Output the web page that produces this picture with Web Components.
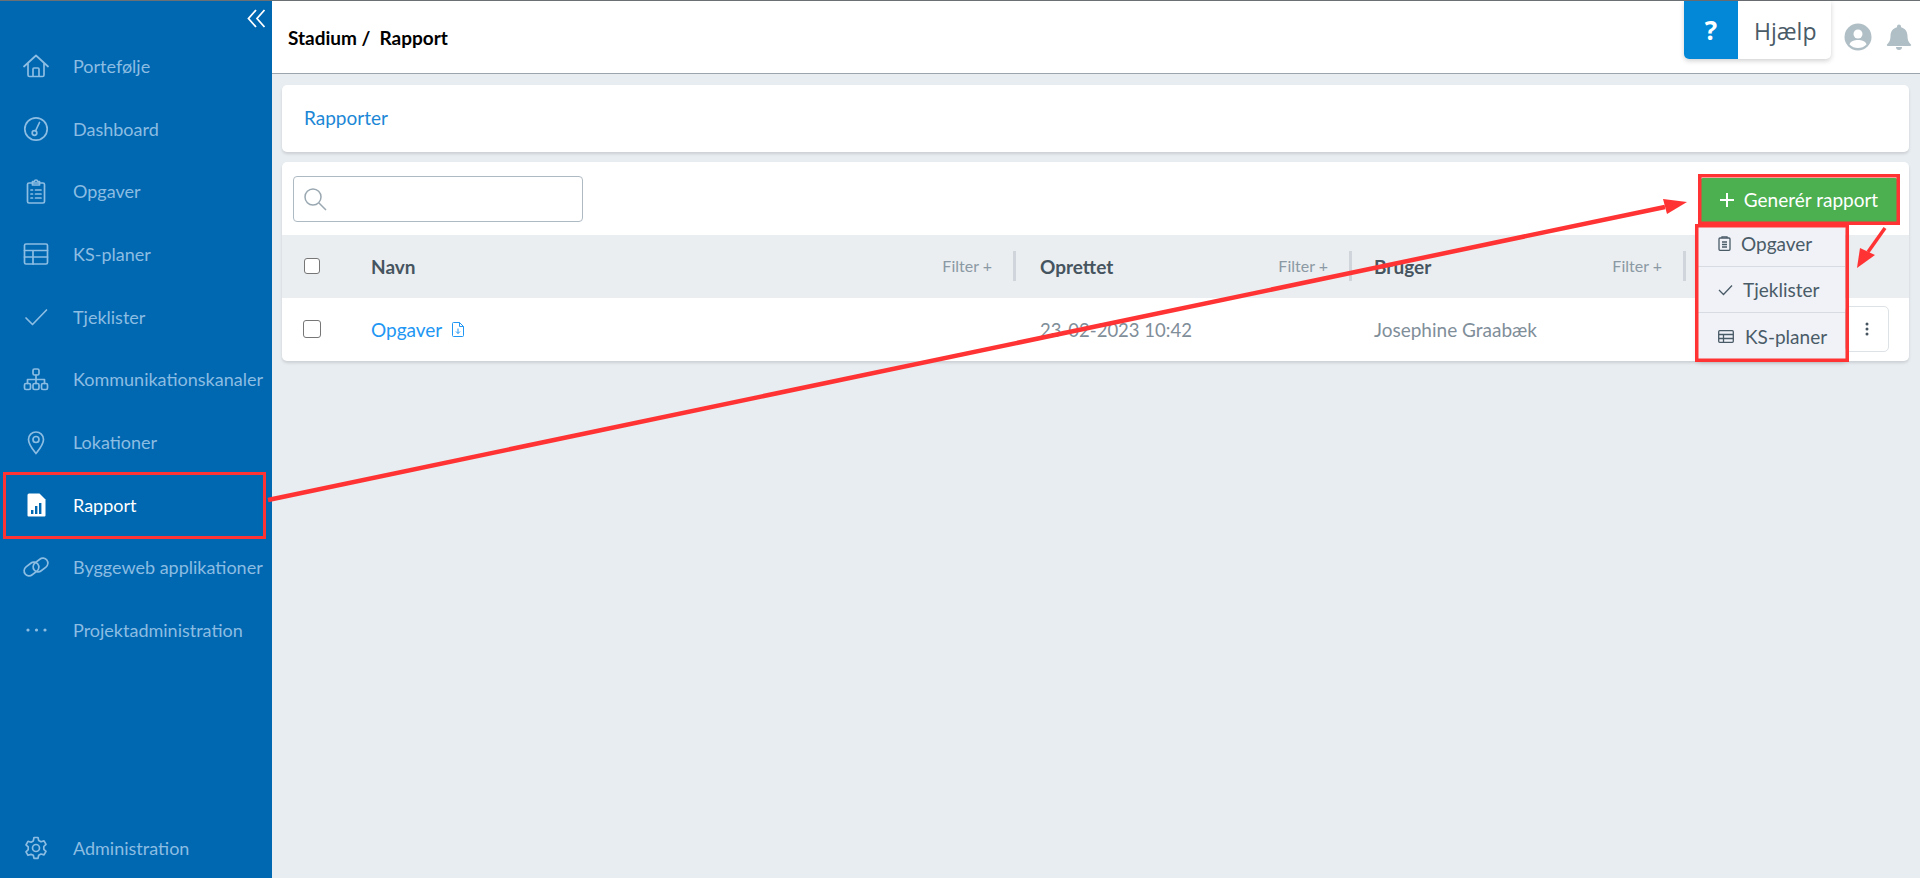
<!DOCTYPE html>
<html>
<head>
<meta charset="utf-8">
<style>
  html, body { margin: 0; height: 100%; }
  body { font-family: Lato, "Liberation Sans", sans-serif; overflow: hidden; }
  nav-item[slot=bottom] { height: 60px; }
</style>
</head>
<body>
<app-shell>
  <app-sidebar slot="side">
    <nav-item icon="home">Portefølje</nav-item>
    <nav-item icon="gauge">Dashboard</nav-item>
    <nav-item icon="clipboard">Opgaver</nav-item>
    <nav-item icon="table">KS-planer</nav-item>
    <nav-item icon="check">Tjeklister</nav-item>
    <nav-item icon="sitemap">Kommunikationskanaler</nav-item>
    <nav-item icon="pin">Lokationer</nav-item>
    <nav-item icon="report" active>Rapport</nav-item>
    <nav-item icon="link">Byggeweb applikationer</nav-item>
    <nav-item icon="dots">Projektadministration</nav-item>
    <nav-item icon="gear" slot="bottom">Administration</nav-item>
  </app-sidebar>
  <app-header slot="head"></app-header>
  <tab-card>Rapporter</tab-card>
  <report-table></report-table>
</app-shell>
<red-marks></red-marks>

<script>
const ICONS = {
  home: '<path d="M1 13.500 13 2.500l12 11M5 10.500V22a1.500 1.500 0 0 0 1.500 1.500h13A1.500 1.500 0 0 0 21 22V10.500M10 23.500V16a1 1 0 0 1 1-1h4a1 1 0 0 1 1 1v7.500"/>',
  gauge: '<circle cx="13" cy="13" r="11.200"/><circle cx="11.500" cy="17" r="2.300"/><path d="M12.500 15 16.500 6.500"/>',
  clipboard: '<rect x="4.500" y="5" width="17" height="20" rx="1.500"/><path d="M9.500 5V3.500h2a1.500 1.500 0 0 1 3 0h2V7h-7zM12.500 12H18M12.500 16H18M12.500 20H18M8 12h1.500M8 16h1.500M8 20h1.500"/>',
  table: '<rect x="1.500" y="3" width="23" height="20" rx="1.500"/><path d="M1.500 9.500h23M1.500 16h23M10 9.500V23"/>',
  check: '<path d="M3 14 9.500 20.500 23.500 6"/>',
  sitemap: '<rect x="10" y="3" width="6" height="6" rx="1.500"/><rect x="1.500" y="17.500" width="6" height="6" rx="1.500"/><rect x="10" y="17.500" width="6" height="6" rx="1.500"/><rect x="18.500" y="17.500" width="6" height="6" rx="1.500"/><path d="M13 9v8.500M4.500 17.500V13.500h17v4"/>',
  pin: '<path d="M13 24.500C9 19.500 5.500 15.500 5.500 10.500a7.500 7.500 0 0 1 15 0c0 5-3.500 9-7.500 14z"/><circle cx="13" cy="10.500" r="3"/>',
  link: '<rect x="0.500" y="10" width="16" height="10" rx="5" transform="rotate(-38 8.500 15)"/><rect x="9.500" y="6" width="16" height="10" rx="5" transform="rotate(-38 17.500 11)"/>',
  gear: '<circle cx="13" cy="13" r="3.500"/><path d="M11 2.500h4l.7 3 2.300 1.300 3-.9 2 3.500-2.200 2.100v2.800l2.200 2.100-2 3.500-3-.9-2.300 1.300-.7 3h-4l-.7-3L8 19.400l-3 .9-2-3.500 2.200-2.100v-2.800L3 9.800l2-3.500 3 .9 2.300-1.300z"/>'
};
function icon(name) {
  if (name === 'report') return '<svg viewBox="0 0 26 26" width="26" height="26"><path fill="#fff" d="M6 1.500h10.500l6 6V23.500a1 1 0 0 1-1 1H5.500a1 1 0 0 1-1-1V3a1.500 1.500 0 0 1 1.500-1.500z"/><path fill="#0067b1" d="M8 18h2.400v4H8zM12 14h2.400v8H12zM16 11h2.400v11H16z"/></svg>';
  if (name === 'dots') return '<svg viewBox="0 0 26 26" width="26" height="26" fill="#8cbde2"><circle cx="5" cy="13" r="1.600"/><circle cx="13.500" cy="13" r="1.600"/><circle cx="22" cy="13" r="1.600"/></svg>';
  return `<svg viewBox="0 0 26 26" width="26" height="26" fill="none" stroke="currentColor" stroke-width="1.700" stroke-linecap="round" stroke-linejoin="round">${ICONS[name]}</svg>`;
}

class AppShell extends HTMLElement {
  constructor() {
    super();
    this.shadow = this.attachShadow({ mode: "open" });
    this.shadow.innerHTML = `<style>
      :host { display: grid; grid-template-columns: 272px 1fr; grid-template-rows: 73px 1fr; height: 878px; background: #e8edf1; border-top: 1px solid #6b7075; box-sizing: border-box; }
      .side { grid-row: 1 / 3; display: flex; }
      main { padding: 11px 11px 0 10px; display: flex; flex-direction: column; gap: 10px; }
    </style>
    <div class="side"><slot name="side"></slot></div>
    <div><slot name="head"></slot></div>
    <main><slot></slot></main>`;
  }
}
customElements.define("app-shell", AppShell);

class AppSidebar extends HTMLElement {
  constructor() {
    super();
    this.shadow = this.attachShadow({ mode: "open" });
    this.shadow.innerHTML = `<style>
      :host { display: flex; flex-direction: column; width: 272px; background: #0067b1; box-sizing: border-box; }
      .top { height: 33.5px; display: flex; justify-content: flex-end; padding: 8px 6px 0 0; box-sizing: border-box; }
      .list { display: flex; flex-direction: column; flex: 1; }
    </style>
    <div class="top"><svg width="19" height="19" viewBox="0 0 19 19" fill="none" stroke="#fff" stroke-width="1.800"><path d="M9 1 1.500 9.500 9 18M17.500 1 10 9.500 17.500 18"/></svg></div>
    <div class="list"><slot></slot></div>
    <div><slot name="bottom"></slot></div>`;
  }
}
customElements.define("app-sidebar", AppSidebar);

class NavItem extends HTMLElement {
  constructor() {
    super();
    this.shadow = this.attachShadow({ mode: "open" });
    const on = this.hasAttribute("active");
    this.shadow.innerHTML = `<style>
      :host { display: flex; align-items: center; height: 62.7px; color: ${on ? "#fff" : "#8cbde2"}; font-size: 18px; white-space: nowrap; }
      .ic { width: 26px; height: 26px; margin: 0 24px 0 23px; flex: none; }
      .ic svg { display: block; }
    </style>
    <span class="ic">${icon(this.getAttribute("icon"))}</span><slot></slot>`;
  }
}
customElements.define("nav-item", NavItem);

class AppHeader extends HTMLElement {
  constructor() {
    super();
    this.shadow = this.attachShadow({ mode: "open" });
    this.shadow.innerHTML = `<style>
      :host { display: flex; align-items: flex-start; height: 73px; background: #fff; border-bottom: 1px solid #9aa5ad; box-sizing: border-box; }
      .crumb { flex: 1; align-self: center; display: flex; gap: 9px; padding-left: 16px; color: #000; font-size: 19px; font-weight: 700; }
      .icons { display: flex; align-items: center; gap: 14px; height: 72px; margin-left: 13px; margin-right: 8px; }
      svg { display: block; }
    </style>
    <div class="crumb"><span>Stadium /</span><span>Rapport</span></div>
    <help-box></help-box>
    <div class="icons">
      <svg width="28" height="28" viewBox="0 0 28 28"><circle cx="14" cy="14" r="13.500" fill="#b0bec5"/><circle cx="14" cy="11" r="4.500" fill="#fff"/><path fill="#fff" d="M5.500 21.500c1-3.500 5-4.500 8.500-4.500s7.500 1 8.500 4.500a12 12 0 0 1-17 0z"/></svg>
      <svg width="26" height="28" viewBox="0 0 26 28" fill="#b0bec5"><path d="M13 1.500a2 2 0 0 1 2 2v.700c4 1 6.500 4.300 6.500 8.800 0 4.500 1.500 6.500 3.500 8.500.500.700 0 1.500-1 1.500H2c-1 0-1.500-.800-1-1.500 2-2 3.500-4 3.500-8.500 0-4.500 2.500-7.800 6.500-8.800v-.700a2 2 0 0 1 2-2z"/><path d="M10 24h6a3 3 0 0 1-6 0z"/></svg>
    </div>`;
  }
}
customElements.define("app-header", AppHeader);

class HelpBox extends HTMLElement {
  constructor() {
    super();
    this.shadow = this.attachShadow({ mode: "open" });
    this.shadow.innerHTML = `<style>
      :host { display: flex; height: 58px; width: 147px; background: #fff; border-radius: 0 0 5px 5px; box-shadow: 0 2px 5px rgba(0,0,0,.18); overflow: hidden; }
      .q { width: 54px; background: #0288d6; color: #fff; font: 700 26px "Open Sans", sans-serif; display: flex; align-items: center; justify-content: center; }
      .t { flex: 1; display: flex; align-items: center; padding: 2px 0 0 16px; color: #4a5b68; font: 400 23px "Open Sans", sans-serif; }
    </style>
    <div class="q">?</div><div class="t">Hjælp</div>`;
  }
}
customElements.define("help-box", HelpBox);

class TabCard extends HTMLElement {
  constructor() {
    super();
    this.shadow = this.attachShadow({ mode: "open" });
    this.shadow.innerHTML = `<style>
      :host { display: flex; align-items: center; height: 67px; padding: 0 0 2px 22px; box-sizing: border-box; background: #fff; border-radius: 5px; box-shadow: 0 2px 3px rgba(0,0,0,.12); color: #1c87d6; font-size: 19px; }
    </style><slot></slot>`;
  }
}
customElements.define("tab-card", TabCard);

class ReportTable extends HTMLElement {
  constructor() {
    super();
    this.shadow = this.attachShadow({ mode: "open" });
    this.shadow.innerHTML = `<style>
      :host { display: block; position: relative; background: #fff; border-radius: 5px; box-shadow: 0 2px 3px rgba(0,0,0,.12); font-size: 19px; }
      .tools { height: 73px; padding: 14px 0 0 11px; box-sizing: border-box; display: flex; align-items: flex-start; justify-content: space-between; }
      .search { width: 290px; height: 46px; box-sizing: border-box; border: 1px solid #aebac3; border-radius: 4px; display: flex; align-items: center; padding-left: 9px; color: #9aa8b2; }
      .gen { width: 198px; height: 46px; margin: 2px 11px 0 0; padding: 0 0 3px 0; box-sizing: border-box; background: #4caf50; color: #fff; border-radius: 3px; display: flex; align-items: center; justify-content: center; gap: 10px; }
      .row { display: grid; grid-template-columns: 89px 642px 336px 334px 1fr; align-items: center; height: 63px; }
      .row.h { background: #ebeef1; color: #46545f; font-weight: 700; }
      .cell { height: 100%; display: flex; align-items: center; box-sizing: border-box; position: relative; }
      .cell:first-child { padding-left: 22px; }
      .h .cell + .cell { justify-content: space-between; padding-right: 21px; }
      .h .cell:nth-child(n+3)::before { content: ""; position: absolute; left: 0; top: 16px; height: 30px; width: 2.5px; background: #cfd5da; }
      .cell:nth-child(3) { padding-left: 27px; }
      .cell:nth-child(4) { padding-left: 25px; }
      .filter { font-weight: 400; font-size: 16px; color: #8a99a3; margin-top: -2px; }
      .box { width: 16px; height: 16px; box-sizing: border-box; border: 1.5px solid #767676; border-radius: 3px; background: #fff; margin-top: -2px; }
      .body .box { width: 18px; height: 18px; margin-left: -1px; }
      .body { color: #7f8e99; }
      .body .cell:nth-child(2) { color: #2196f3; gap: 10px; }
      .date { font-size: 18.5px; }
      .kebab { position: absolute; right: 20px; top: 8px; width: 44px; height: 46px; box-sizing: border-box; border: 1px solid #dde2e6; border-radius: 5px; display: flex; align-items: center; justify-content: center; }
      svg { display: block; }
      .menu { position: absolute; left: 1416px; top: 63px; width: 147px; background: #f0f2f7; color: #4a5b68; box-shadow: 0 3px 6px rgba(0,0,0,.2); z-index: 2; }
      .menu div { height: 46px; display: flex; align-items: center; padding-left: 20px; gap: 10px; box-sizing: border-box; border-bottom: 1px solid #d8dce2; }
      .menu div:first-child { height: 42px; padding-bottom: 4px; }
      .menu div:last-child { border-bottom: 0; }
    </style>
    <div class="tools">
      <div class="search"><svg width="24" height="24" viewBox="0 0 24 24" fill="none" stroke="currentColor" stroke-width="1.500"><circle cx="10" cy="10" r="8"/><path d="m16 16 7 7"/></svg></div>
      <div class="gen"><svg width="14" height="14" viewBox="0 0 14 14" stroke="#fff" stroke-width="2"><path d="M7 0v14M0 7h14"/></svg>Generér rapport</div>
    </div>
    <div class="row h">
      <div class="cell"><span class="box"></span></div>
      <div class="cell">Navn<span class="filter">Filter +</span></div>
      <div class="cell">Oprettet<span class="filter">Filter +</span></div>
      <div class="cell">Bruger<span class="filter">Filter +</span></div>
      <div class="cell"></div>
    </div>
    <div class="row body">
      <div class="cell"><span class="box"></span></div>
      <div class="cell">Opgaver <svg width="12" height="15" viewBox="0 0 12 15" fill="none" stroke="#2196f3"><path d="M1.500.500h6l4 4v9a1 1 0 0 1-1 1h-9a1 1 0 0 1-1-1V1.500a1 1 0 0 1 1-1zM7.500.500v4h4M6 6.500v5M4 9.500l2 2 2-2"/></svg></div>
      <div class="cell date">23-02-2023 10:42</div>
      <div class="cell">Josephine Graabæk</div>
      <div class="cell"><span class="kebab"><svg width="4" height="14" fill="#46545f"><circle cx="2" cy="2" r="1.500"/><circle cx="2" cy="7" r="1.500"/><circle cx="2" cy="12" r="1.500"/></svg></span></div>
    </div>
    <div class="menu">
      <div><svg width="13" height="15" viewBox="0 0 13 15" fill="none" stroke="currentColor" stroke-width="1.300"><rect x="1" y="2" width="11" height="12.300" rx="1"/><path d="M4 2V.800h5V2M4 6h5M4 8.500h5M4 11h5"/></svg>Opgaver</div>
      <div><svg width="15" height="12" viewBox="0 0 15 12" fill="none" stroke="currentColor" stroke-width="1.300"><path d="m1 6 4.500 4.500L14 1.500"/></svg>Tjeklister</div>
      <div style="gap:11px"><svg width="16" height="13" viewBox="0 0 16 13" fill="none" stroke="currentColor" stroke-width="1.300"><rect x=".7" y=".7" width="14.600" height="11.600" rx="1"/><path d="M.7 4.500h14.600M.7 8.500h14.600M5.500 4.500v8"/></svg>KS-planer</div>
    </div>`;
  }
}
customElements.define("report-table", ReportTable);

// screenshot annotations, drawn over the whole page
class RedMarks extends HTMLElement {
  constructor() {
    super();
    this.shadow = this.attachShadow({ mode: "open" });
    this.shadow.innerHTML = `<style>
      :host { position: absolute; left: 0; top: 0; width: 1920px; height: 878px; pointer-events: none; z-index: 5; }
      svg { display: block; }
    </style>
    <svg width="1920" height="878" fill="none" stroke="#ff3333" stroke-width="3.5">
      <rect x="4.500" y="473.500" width="260" height="64" stroke-width="3"/>
      <rect x="1699.750" y="175.750" width="198.500" height="47.500"/>
      <rect x="1696.750" y="225.750" width="150.500" height="134.500"/>
      <path d="M268 500 1665 207" stroke-width="4.500"/>
      <path fill="#ff3333" stroke="none" d="M1687 202 1663 199 1667 214z"/>
      <path d="M1885 228 1868 252" stroke-width="3.500"/>
      <path fill="#ff3333" stroke="none" d="M1857 268 1860 248 1875 255z"/>
    </svg>`;
  }
}
customElements.define("red-marks", RedMarks);
</script>
</body>
</html>
